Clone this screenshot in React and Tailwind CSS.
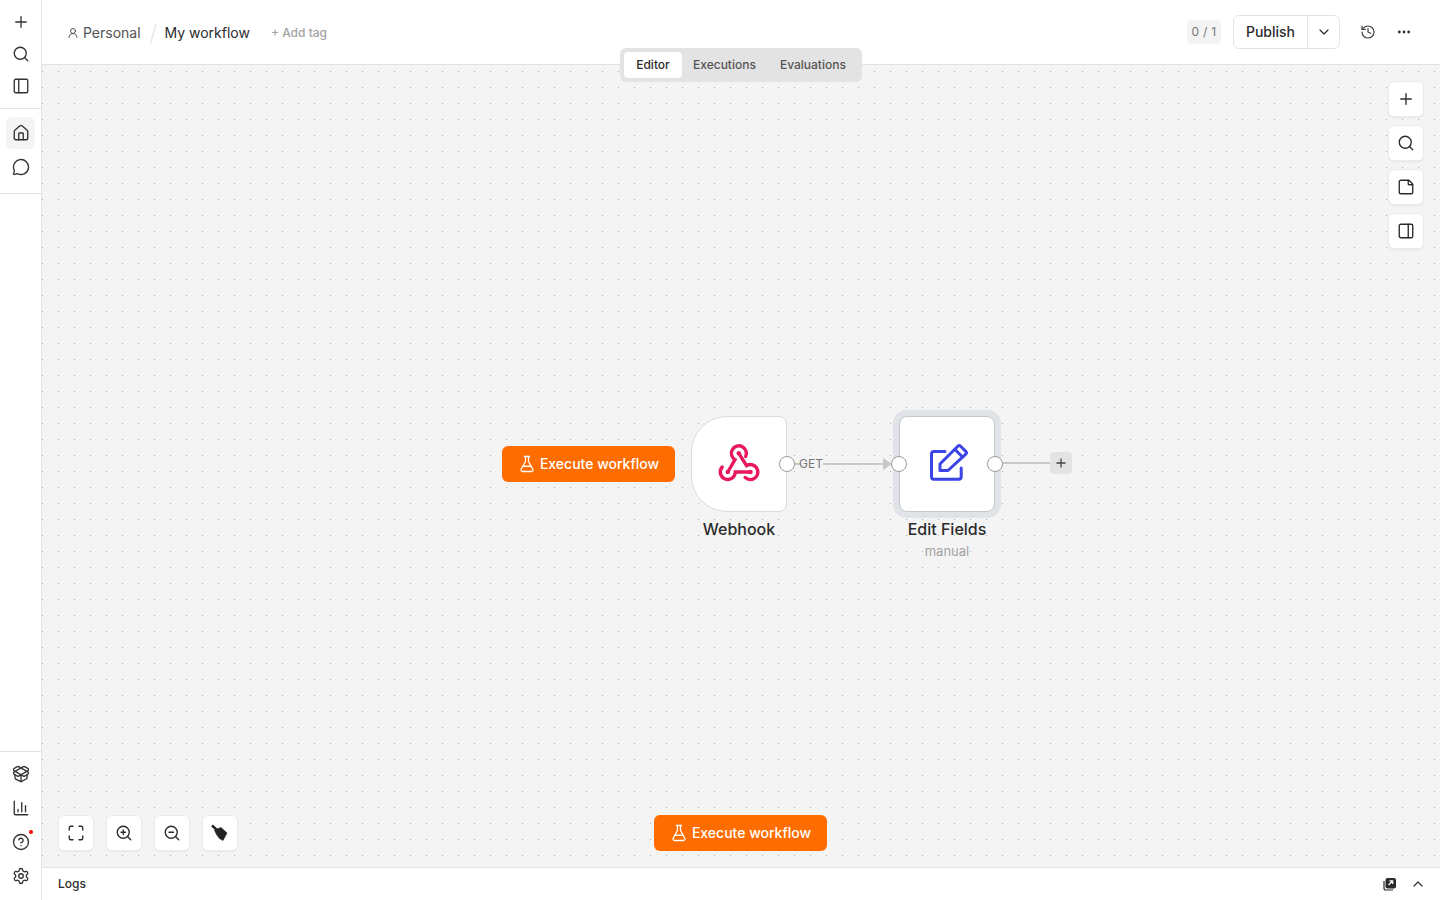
import {
  Plus, Search, PanelLeft, House, MessageCircle, PackageOpen, ChartColumn, CircleHelp, Settings,
  FlaskConical, History, Ellipsis, ChevronDown, ChevronUp, StickyNote, PanelRight, Maximize,
  ZoomIn, ZoomOut, UserRound,
} from 'lucide-react'

function ExecuteButton({ className }) {
  return (
    <button className={`absolute flex items-center justify-center gap-[4px] w-[173px] h-9 rounded-md bg-[#ff6d00] text-white text-sm font-medium ${className}`}>
      <FlaskConical size={18} strokeWidth={1.7} />
      <span>Execute workflow</span>
    </button>
  )
}

function ToolButton({ children }) {
  return (
    <button className="flex items-center justify-center w-9 h-9 rounded-md bg-white border border-[#ebebeb] shadow-[0_1px_2px_rgba(0,0,0,0.06)] text-[#2b2b2b]">
      {children}
    </button>
  )
}

function SideIcon({ children, active }) {
  return (
    <div className={`flex items-center justify-center w-[29px] h-[32px] rounded-md ${active ? 'bg-[#f4f4f4]' : ''}`}>
      {children}
    </div>
  )
}

function Port({ className }) {
  return <div className={`absolute w-4 h-4 rounded-full bg-white border border-[#9a9a9a] ${className}`}></div>
}

function WebhookIcon() {
  return (
    <svg width="56" height="56" viewBox="0 0 56 56" fill="none" stroke="#e8185f" strokeWidth="3.4" strokeLinecap="round">
      <path d="M16.8 36 24 23.7A7.5 7.5 0 1 1 34.6 20.6" />
      <path d="M27.8 17.3 35.6 29.6A7.5 7.5 0 1 1 34.2 41.5" />
      <path d="M39.5 36H24.3A7.5 7.5 0 1 1 11.2 31" />
      <circle cx="27.8" cy="17.3" r="2.3" fill="#e8185f" stroke="none" />
      <circle cx="16.8" cy="36" r="2.3" fill="#e8185f" stroke="none" />
      <circle cx="39.5" cy="36" r="2.3" fill="#e8185f" stroke="none" />
    </svg>
  )
}

function EditIcon() {
  return (
    <svg width="40" height="40" viewBox="0 0 40 40" fill="none" stroke="#3b45e6" strokeWidth="3" strokeLinejoin="round" strokeLinecap="round" className="ml-[4px] mb-[2px]">
      <path d="M16 8.5H5A2.5 2.5 0 0 0 2.5 11V33.8A2.5 2.5 0 0 0 5 36.3H29.7A2.5 2.5 0 0 0 32.2 33.8V25" />
      <path d="M11 27.5V21L28.8 3.2A2 2 0 0 1 31.6 3.2L36.8 8.4A2 2 0 0 1 36.8 11.2L19 27.5Z" />
      <path d="M26 6.5 33.5 14" />
    </svg>
  )
}

function BroomIcon() {
  return (
    <svg width="18" height="18" viewBox="0 0 18 18" fill="#222" stroke="#222" strokeLinejoin="round">
      <path d="M1 1.5 6.5 6.5" strokeWidth="2.4" fill="none" />
      <path d="M3.5 6 10 3.5 16 9 12 16.5 8.5 14.5 5.5 10.5Z" strokeWidth="0.6" />
    </svg>
  )
}

export default function App() {
  return (
    <div className="flex w-[1440px] h-[900px] overflow-hidden bg-white text-[#2b2b2b] font-['Inter',sans-serif]">
      {/* Sidebar */}
      <aside className="flex flex-col w-[42px] shrink-0 border-r border-[#e3e3e3] bg-white text-[#333]">
        <div className="flex flex-col items-center pt-[6px] h-[109px] border-b border-[#e3e3e3]">
          <SideIcon><Plus size={18} strokeWidth={1.8} /></SideIcon>
          <SideIcon><Search size={18} strokeWidth={1.8} /></SideIcon>
          <SideIcon><PanelLeft size={18} strokeWidth={1.8} /></SideIcon>
        </div>
        <div className="flex flex-col items-center pt-[8px] gap-[2px] h-[85px] border-b border-[#e3e3e3]">
          <SideIcon active><House size={18} strokeWidth={1.8} /></SideIcon>
          <SideIcon><MessageCircle size={18} strokeWidth={1.8} /></SideIcon>
        </div>
        <div className="flex-1"></div>
        <div className="flex flex-col items-center pt-[6px] gap-[2px] h-[149px] border-t border-[#e3e3e3]">
          <SideIcon><PackageOpen size={18} strokeWidth={1.8} /></SideIcon>
          <SideIcon><ChartColumn size={18} strokeWidth={1.8} /></SideIcon>
          <div className="relative">
            <SideIcon><CircleHelp size={18} strokeWidth={1.8} /></SideIcon>
            <span className="absolute top-[4px] right-[2px] w-1 h-1 rounded-full bg-[#f00]"></span>
          </div>
          <SideIcon><Settings size={18} strokeWidth={1.8} /></SideIcon>
        </div>
      </aside>

      <div className="flex flex-col flex-1 min-w-0">
        {/* Header */}
        <header className="relative flex items-center h-[65px] shrink-0 pl-[25px] pr-[28px] border-b border-[#e3e3e3] bg-white">
          <div className="flex items-center pt-[2px]">
            <UserRound size={12} strokeWidth={1.8} className="text-[#444] mr-[4px]" />
            <span className="text-sm text-[#555]">Personal</span>
            <span className="ml-[9px] mr-[7.5px] text-[#dedede] text-[22px] leading-5 font-extralight">/</span>
            <span className="text-sm text-[#2b2b2b]">My workflow</span>
            <span className="ml-[21px] text-xs font-medium text-[#a3a3a3]">+ Add tag</span>
          </div>
          <div className="flex-1"></div>
          <span className="flex items-center justify-center w-[34px] h-6 rounded bg-[#f4f4f4] text-xs text-[#777] tracking-wide">0 / 1</span>
          <div className="flex items-center h-[34px] ml-3 rounded-md border border-[#e3e3e3]">
            <span className="flex items-center justify-center w-[74px] h-full text-sm font-medium border-r border-[#e3e3e3]">Publish</span>
            <span className="flex items-center justify-center w-[31px] h-full"><ChevronDown size={16} strokeWidth={1.8} /></span>
          </div>
          <History size={16} strokeWidth={1.8} className="ml-[20px] text-[#444]" />
          <Ellipsis size={16} strokeWidth={2.2} className="ml-[20px] text-[#333]" />
          {/* Tabs */}
          <div className="absolute left-[578px] top-[48px] z-10 flex items-center h-[34px] px-1 rounded-md bg-[#e3e3e3] text-xs font-medium text-[#555]">
            <span className="flex items-center justify-center w-[58px] h-[26px] rounded bg-white text-[#2b2b2b]">Editor</span>
            <span className="ml-[11px]">Executions</span>
            <span className="ml-[24px] mr-[12px]">Evaluations</span>
          </div>
        </header>

        {/* Canvas */}
        <main className="relative flex-1 bg-[#f4f4f4] bg-[radial-gradient(circle_at_0.5px_0.5px,#b0b0b0_0.5px,transparent_0.5px)] bg-[size:16px_16px] bg-[position:0px_6px]">
          <div className="absolute right-4 top-4 flex flex-col gap-2">
            <ToolButton><Plus size={18} strokeWidth={1.8} /></ToolButton>
            <ToolButton><Search size={18} strokeWidth={1.8} /></ToolButton>
            <ToolButton><StickyNote size={18} strokeWidth={1.8} /></ToolButton>
            <ToolButton><PanelRight size={18} strokeWidth={1.8} /></ToolButton>
          </div>

          <ExecuteButton className="left-[460px] top-[381px]" />

          {/* Webhook node */}
          <div className="absolute left-[649px] top-[351px] flex items-center justify-center w-[96px] h-[96px] rounded-l-[36px] rounded-r-lg bg-white border border-[#dcdcdc]">
            <WebhookIcon />
          </div>
          <div className="absolute left-[637px] top-[454px] w-[120px] text-center text-base font-medium leading-5">Webhook</div>
          <Port className="left-[737px] top-[391px]" />
          <div className="absolute left-[753px] top-[398px] w-[6px] h-[2px] bg-[#c8c8c8]"></div>
          <span className="absolute left-[757px] top-[392px] text-xs leading-[14px] text-[#777]">GET</span>
          <div className="absolute left-[781px] top-[398px] w-[60px] h-[2px] bg-[#c8c8c8]"></div>
          <div className="absolute left-[841px] top-[393px] w-0 h-0 border-y-[6px] border-y-transparent border-l-[9px] border-l-[#c8c8c8]"></div>

          {/* Edit Fields node */}
          <div className="absolute left-[851px] top-[345px] w-[108px] h-[108px] rounded-[14px] bg-[#e0e3e8] p-[6px]">
            <div className="flex items-center justify-center w-full h-full rounded-lg bg-white border border-[#c8c8c8]">
              <EditIcon />
            </div>
          </div>
          <div className="absolute left-[845px] top-[454px] w-[120px] text-center text-base font-medium leading-5">Edit Fields</div>
          <div className="absolute left-[845px] top-[478px] w-[120px] text-center text-[13px] leading-4 text-[#a3a3a3]">manual</div>
          <Port className="left-[849px] top-[391px]" />
          <Port className="left-[945px] top-[391px]" />
          <div className="absolute left-[961px] top-[397px] w-[48px] h-[2px] bg-[#c8c8c8]"></div>
          <div className="absolute left-[1008px] top-[387px] flex items-center justify-center w-[22px] h-[22px] rounded bg-[#e3e3e3] text-[#444]">
            <Plus size={14} strokeWidth={2.2} />
          </div>

          {/* Bottom tools */}
          <div className="absolute left-4 bottom-4 flex gap-3">
            <ToolButton><Maximize size={18} strokeWidth={1.8} /></ToolButton>
            <ToolButton><ZoomIn size={18} strokeWidth={1.8} /></ToolButton>
            <ToolButton><ZoomOut size={18} strokeWidth={1.8} /></ToolButton>
            <ToolButton><BroomIcon /></ToolButton>
          </div>
          <ExecuteButton className="left-[612px] bottom-4" />
        </main>

        {/* Logs bar */}
        <footer className="flex items-center h-[33px] shrink-0 pl-4 pr-[14px] border-t border-[#e3e3e3] bg-white">
          <span className="text-xs font-medium">Logs</span>
          <div className="flex-1"></div>
          <svg width="14" height="14" viewBox="0 0 14 14" className="mr-[13px]">
            <rect x="2.5" y="1" width="10.5" height="10.5" rx="2" fill="#2b2b2b" />
            <path d="M1 4v7a2 2 0 0 0 2 2h7" fill="none" stroke="#2b2b2b" strokeWidth="1.2" />
            <path d="M5.5 8l4-4M6.5 3.8h3.2V7" fill="none" stroke="#fff" strokeWidth="1.2" />
          </svg>
          <ChevronUp size={16} strokeWidth={1.8} className="text-[#333]" />
        </footer>
      </div>
    </div>
  )
}
